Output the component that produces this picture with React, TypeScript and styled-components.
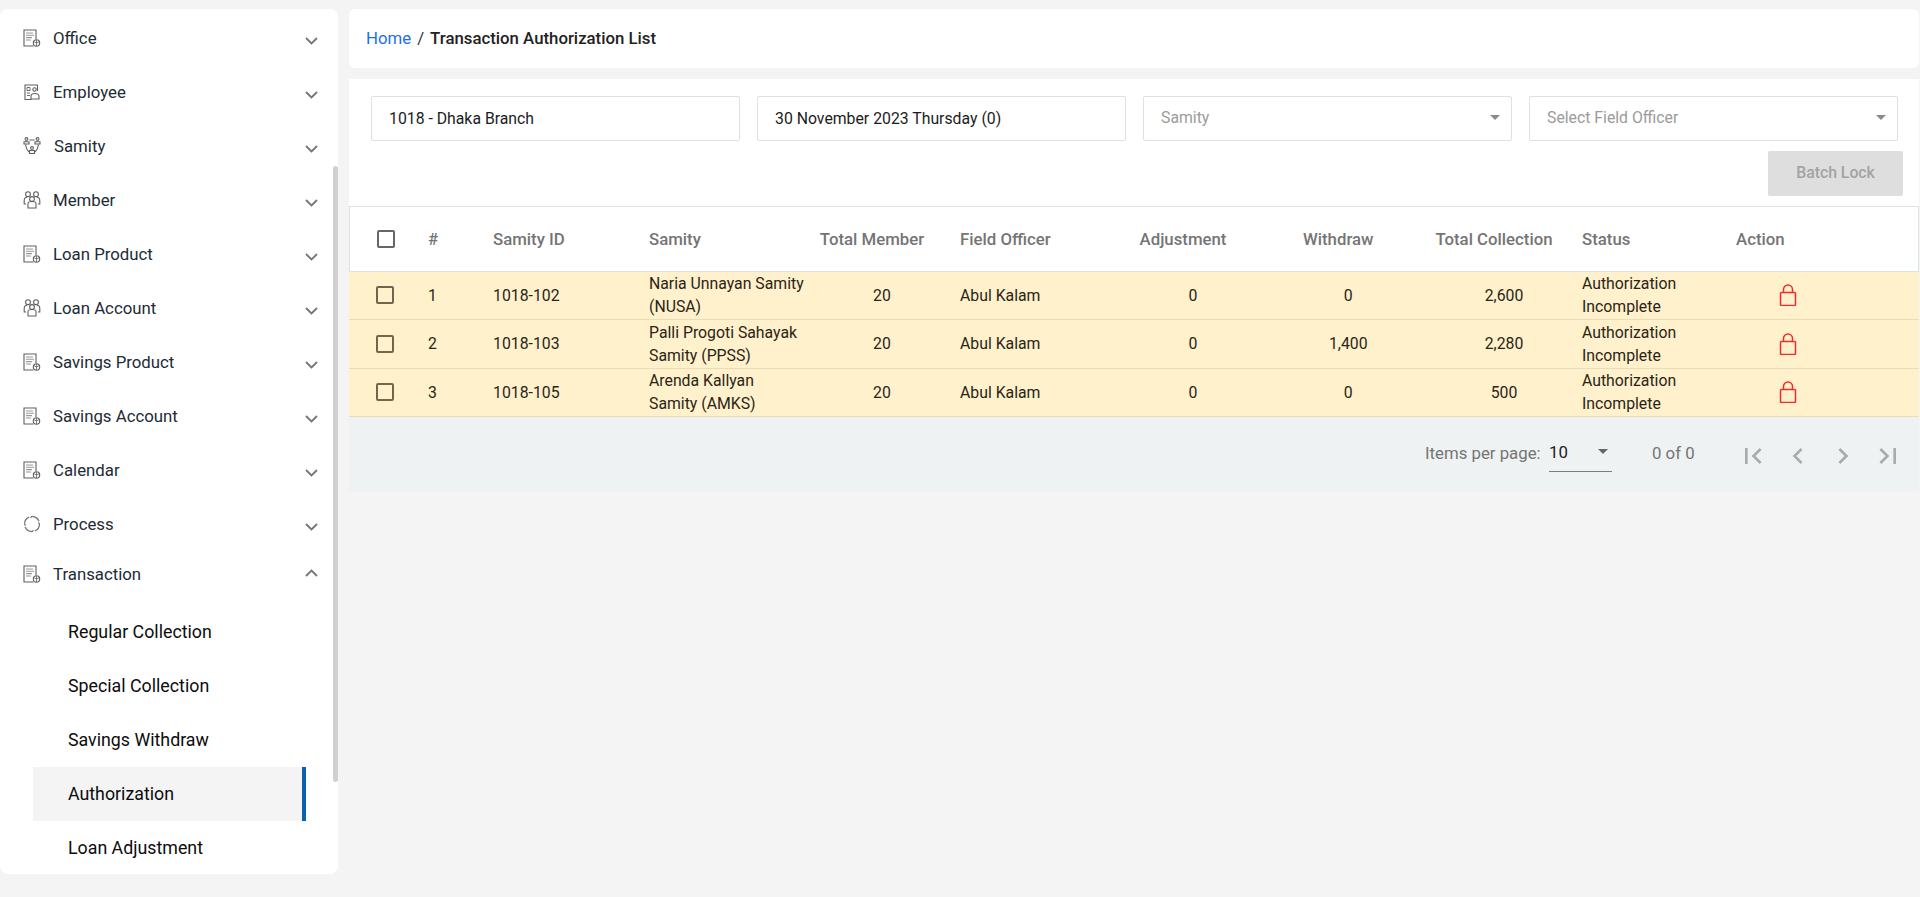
import React from "react";
import styled, { createGlobalStyle } from "styled-components";

const Global = createGlobalStyle`
  html, body { margin: 0; padding: 0; background: #f4f4f4; height: 100%; overflow: hidden; }
  body { font-family: Roboto, "Liberation Sans", sans-serif; }
  * { box-sizing: border-box; }
`;

const Page = styled.div`
  display: grid;
  grid-template-columns: 338px 1fr;
  column-gap: 11px;
  padding: 9px 1px 0 0;
  height: 897px;
  align-items: start;
`;

const Sidebar = styled.aside`
  position: relative;
  height: 865px;
  background: #fff;
  border-radius: 8px;
  overflow: hidden;
`;

const ScrollThumb = styled.div`
  position: absolute;
  right: 0;
  top: 157px;
  width: 5px;
  height: 616px;
  background: #d0d0d0;
  border-radius: 3px;
`;

const Menu = styled.nav`
  display: flex;
  flex-direction: column;
  padding-top: 2px;
`;

const MenuRow = styled.div<{ $open?: boolean }>`
  display: grid;
  grid-template-columns: 17px 1fr 13px;
  align-items: center;
  column-gap: 13px;
  height: ${(p) => (p.$open ? "46px" : "54px")};
  padding: 0 20px 0 23px;
  margin-bottom: ${(p) => (p.$open ? "8px" : "0")};
  color: #212b36;
  font-size: 16.8px;
`;

const MenuLabel = styled.span<{ $shift?: number }>`
  margin-left: ${(p) => p.$shift ?? 0}px;
`;

const Chevron = styled.svg<{ $up?: boolean }>`
  width: 13px;
  height: 8px;
  fill: none;
  stroke: #757575;
  stroke-width: 1.8;
  position: relative;
  top: ${(p) => (p.$up ? "-1px" : "3px")};
`;

const MenuIconSvg = styled.svg`
  width: 18px;
  height: 18px;
  fill: none;
  stroke: #606060;
  stroke-width: 1.1;
`;

const SubRow = styled.div<{ $active?: boolean }>`
  display: flex;
  align-items: center;
  height: 54px;
  width: 273px;
  margin-left: 33px;
  padding: 0 0 1px 35px;
  color: #0c0c0c;
  font-size: 17.8px;
  background: ${(p) => (p.$active ? "#f4f4f4" : "transparent")};
  border-right: ${(p) => (p.$active ? "4px solid #0a62ad" : "none")};
`;

const Main = styled.main`
  display: flex;
  flex-direction: column;
  gap: 11px;
  min-width: 0;
`;

const BreadcrumbCard = styled.div`
  display: flex;
  align-items: center;
  gap: 6px;
  height: 59px;
  padding: 0 0 2px 17px;
  background: #fff;
  border-radius: 6px;
  font-size: 16.8px;
`;

const Home = styled.a`
  color: #1a6ff0;
`;

const Slash = styled.span`
  color: #333;
`;

const Crumb = styled.span`
  color: #222;
  font-weight: 500;
`;

const FilterCard = styled.section`
  background: #fff;
  padding: 17px 0 0;
`;

const FilterGrid = styled.div`
  display: grid;
  grid-template-columns: repeat(4, 368.5px);
  column-gap: 17.5px;
  padding-left: 22px;
`;

const Field = styled.div<{ $placeholder?: boolean }>`
  display: flex;
  align-items: center;
  justify-content: space-between;
  height: 45px;
  padding: ${(p) => (p.$placeholder ? "0 11px 2px 17px" : "0 11px 0 17px")};
  border: 1px solid #e0e0e0;
  border-radius: 2px;
  background: #fff;
  font-size: 15.8px;
  color: ${(p) => (p.$placeholder ? "#9b9b9b" : "#1c1c1c")};
`;

const Caret = styled.span`
  width: 0;
  height: 0;
  border-left: 5px solid transparent;
  border-right: 5px solid transparent;
  border-top: 5px solid #8a8a8a;
`;

const ButtonRow = styled.div`
  display: flex;
  justify-content: flex-end;
  padding: 10px 16px 10px 0;
`;

const BatchButton = styled.button`
  width: 135px;
  height: 45px;
  padding: 0 0 2px;
  border: none;
  border-radius: 2px;
  background: #dedede;
  color: #a3a3a3;
  font: 500 15.8px Roboto, sans-serif;
`;

const cols = "79px 65px 156px 155px 156px 155.5px 155px 155.5px 156px 154px 1fr";

const HeaderRow = styled.div`
  display: grid;
  grid-template-columns: ${cols};
  align-items: center;
  height: 66px;
  box-shadow: inset 0 0 0 1px #d8e4e7;
  background: #fff;
  color: #757575;
  font-size: 16.8px;
  font-weight: 500;
`;

const HeadCell = styled.div<{ $center?: boolean }>`
  text-align: ${(p) => (p.$center ? "center" : "left")};
  padding-right: ${(p) => (p.$center ? "20px" : "0")};
`;

const BodyRow = styled.div`
  display: grid;
  grid-template-columns: ${cols};
  align-items: center;
  height: 48.4px;
  background: #fff1cc;
  border-bottom: 1px solid #e9dcb8;
  color: #2b2416;
  font-size: 15.8px;
  line-height: 23px;
`;

const Cell = styled.div<{ $center?: boolean }>`
  white-space: nowrap;
  text-align: ${(p) => (p.$center ? "center" : "left")};
`;

const Check = styled.span<{ $head?: boolean }>`
  display: block;
  width: 18px;
  height: 18px;
  margin-left: ${(p) => (p.$head ? "28px" : "27px")};
  border: 2px solid ${(p) => (p.$head ? "#666" : "#6f6650")};
  border-radius: 2px;
`;

const LockSvg = styled.svg`
  display: block;
  margin-left: 43px;
  width: 18px;
  height: 22px;
  fill: none;
  stroke: #f5282d;
  stroke-width: 1.5;
`;

const Paginator = styled.div`
  display: flex;
  align-items: center;
  height: 75px;
  padding-left: 1076px;
  background: #eff2f3;
  color: #757575;
  font-size: 16.8px;
`;

const PageLabel = styled.span`
  width: 124px;
  flex: none;
  position: relative;
  top: -2px;
`;

const PageSelect = styled.div`
  position: relative;
  top: -1px;
  flex: none;
  display: flex;
  align-items: center;
  justify-content: space-between;
  width: 63px;
  height: 37px;
  padding: 0 4px 3px 0;
  border-bottom: 1px solid #7d7d7d;
  color: #222;
`;

const SmallCaret = styled(Caret)`
  border-top-color: #666;
`;

const PageCount = styled.span`
  flex: none;
  width: 85px;
  margin-left: 40px;
  position: relative;
  top: -2px;
`;

const PagerIcon = styled.svg`
  flex: none;
  position: relative;
  top: 1px;
  width: 32px;
  height: 32px;
  margin-right: 13px;
  fill: #a9acae;
`;

const docIcon = (
  <MenuIconSvg viewBox="0 0 18 18">
    <path d="M10.500 17H1V1h12v9" />
    <path d="M3 4h7M3 6.300h8M3 8.600h6M3 11h5" stroke="#9a9a9a" />
    <circle cx="13.500" cy="14" r="3.200" />
    <path d="M13.500 11v6M10.900 12.600l2.600 1.400 2.600-1.400" strokeWidth=".8" />
  </MenuIconSvg>
);

const empIcon = (
  <MenuIconSvg viewBox="0 0 18 18">
    <path d="M8.500 16.500H2V2h12.500v6" />
    <path d="M4 4.500h3v3H4zM4 10h3M4 12.500h3" strokeWidth=".9" />
    <circle cx="11.500" cy="6.500" r="1.700" />
    <path d="M8 16v-2.500c0-2 1.500-3 3.500-3s4.500 1 4.500 3V16z" />
  </MenuIconSvg>
);

const samityIcon = (
  <MenuIconSvg viewBox="0 0 18 18" strokeWidth="1">
    <circle cx="3.500" cy="2" r="1.400" />
    <path d="M1 7V4.800h5V7z" />
    <circle cx="14.500" cy="2" r="1.400" />
    <path d="M12 7V4.800h5V7z" />
    <circle cx="9" cy="11" r="1.400" />
    <path d="M6.500 16.500v-3h5v3z" />
    <path d="M6.500 3h5M2.500 7.500c.4 3 1.500 5.500 3.500 7.500M15.500 7.500c-.4 3-1.500 5.500-3.500 7.500" />
  </MenuIconSvg>
);

const memberIcon = (
  <MenuIconSvg viewBox="0 0 18 18">
    <circle cx="5" cy="3.200" r="2.400" />
    <circle cx="13" cy="3.200" r="2.400" />
    <circle cx="9" cy="8" r="2.400" />
    <path d="M3 13H1.200V9.500c0-2 1.300-3.300 3-3.300M15 13h1.800V9.500c0-2-1.300-3.300-3-3.300" />
    <path d="M5 17v-4.500c0-1.500 1.500-2 4-2s4 .5 4 2V17z" />
  </MenuIconSvg>
);

const processIcon = (
  <MenuIconSvg viewBox="0 0 18 18">
    <circle cx="9" cy="9" r="7.500" strokeDasharray="8.600 3.200" strokeWidth="1.300" stroke="#777" />
    <path d="M1.500 9l1 1.500M9 16.500l1.500-1M16.500 9l-1-1.500M9 1.500l-1.500 1" strokeWidth="1.300" />
  </MenuIconSvg>
);

type Item = { label: string; icon: React.ReactNode; shift?: number };

const items: Item[] = [
  { label: "Office", icon: docIcon },
  { label: "Employee", icon: empIcon },
  { label: "Samity", icon: samityIcon, shift: 1 },
  { label: "Member", icon: memberIcon },
  { label: "Loan Product", icon: docIcon },
  { label: "Loan Account", icon: memberIcon },
  { label: "Savings Product", icon: docIcon },
  { label: "Savings Account", icon: docIcon },
  { label: "Calendar", icon: docIcon },
  { label: "Process", icon: processIcon },
];

const subItems = ["Regular Collection", "Special Collection", "Savings Withdraw", "Authorization", "Loan Adjustment"];

const heads: { label: string; center?: boolean }[] = [
  { label: "#" },
  { label: "Samity ID" },
  { label: "Samity" },
  { label: "Total Member", center: true },
  { label: "Field Officer" },
  { label: "Adjustment", center: true },
  { label: "Withdraw", center: true },
  { label: "Total Collection", center: true },
  { label: "Status" },
  { label: "Action" },
];

const rows = [
  { n: 1, id: "1018-102", samity: ["Naria Unnayan Samity", "(NUSA)"], withdraw: "0", total: "2,600" },
  { n: 2, id: "1018-103", samity: ["Palli Progoti Sahayak", "Samity (PPSS)"], withdraw: "1,400", total: "2,280" },
  { n: 3, id: "1018-105", samity: ["Arenda Kallyan", "Samity (AMKS)"], withdraw: "0", total: "500" },
];

const Down = () => (
  <Chevron viewBox="0 0 13 8">
    <path d="M1 1l5.500 5.500L12 1" />
  </Chevron>
);

const Up = () => (
  <Chevron $up viewBox="0 0 13 8">
    <path d="M1 7l5.500-5.500L12 7" />
  </Chevron>
);

const Lock = () => (
  <LockSvg viewBox="0 0 18 22">
    <rect x="1.500" y="8.500" width="15" height="13" rx="1" />
    <path d="M4.500 8.500V5.500a4.500 4.500 0 0 1 9 0v3" />
  </LockSvg>
);

export default function App() {
  return (
    <Page>
      <Global />
      <Sidebar>
        <Menu>
          {items.map((it) => (
            <MenuRow key={it.label}>
              {it.icon}
              <MenuLabel $shift={it.shift}>{it.label}</MenuLabel>
              <Down />
            </MenuRow>
          ))}
          <MenuRow $open>
            {docIcon}
            <MenuLabel>Transaction</MenuLabel>
            <Up />
          </MenuRow>
          {subItems.map((s) => (
            <SubRow key={s} $active={s === "Authorization"}>
              {s}
            </SubRow>
          ))}
        </Menu>
        <ScrollThumb />
      </Sidebar>
      <Main>
        <BreadcrumbCard>
          <Home>Home</Home>
          <Slash>/</Slash>
          <Crumb>Transaction Authorization List</Crumb>
        </BreadcrumbCard>
        <div>
          <FilterCard>
            <FilterGrid>
              <Field>1018 - Dhaka Branch</Field>
              <Field>30 November 2023 Thursday (0)</Field>
              <Field $placeholder>
                Samity
                <Caret />
              </Field>
              <Field $placeholder>
                Select Field Officer
                <Caret />
              </Field>
            </FilterGrid>
            <ButtonRow>
              <BatchButton>Batch Lock</BatchButton>
            </ButtonRow>
            <HeaderRow>
              <Check $head />
              {heads.map((h) => (
                <HeadCell key={h.label} $center={h.center}>
                  {h.label}
                </HeadCell>
              ))}
            </HeaderRow>
          </FilterCard>
          {rows.map((r) => (
            <BodyRow key={r.n}>
              <Check />
              <Cell>{r.n}</Cell>
              <Cell>{r.id}</Cell>
              <Cell>
                {r.samity[0]}
                <br />
                {r.samity[1]}
              </Cell>
              <Cell $center>20</Cell>
              <Cell>Abul Kalam</Cell>
              <Cell $center>0</Cell>
              <Cell $center>{r.withdraw}</Cell>
              <Cell $center>{r.total}</Cell>
              <Cell>
                Authorization
                <br />
                Incomplete
              </Cell>
              <Cell>
                <Lock />
              </Cell>
              <span />
            </BodyRow>
          ))}
          <Paginator>
            <PageLabel>Items per page:</PageLabel>
            <PageSelect>
              10
              <SmallCaret />
            </PageSelect>
            <PageCount>0 of 0</PageCount>
            <PagerIcon viewBox="0 0 24 24">
              <path d="M18.410 16.590L13.820 12l4.590-4.590L17 6l-6 6 6 6zM6 6h2v12H6z" />
            </PagerIcon>
            <PagerIcon viewBox="0 0 24 24">
              <path d="M15.410 7.410L14 6l-6 6 6 6 1.410-1.410L10.830 12z" />
            </PagerIcon>
            <PagerIcon viewBox="0 0 24 24">
              <path d="M10 6L8.590 7.410 13.170 12l-4.580 4.590L10 18l6-6z" />
            </PagerIcon>
            <PagerIcon viewBox="0 0 24 24">
              <path d="M5.590 7.410L10.180 12l-4.590 4.590L7 18l6-6-6-6zM16 6h2v12h-2z" />
            </PagerIcon>
          </Paginator>
        </div>
      </Main>
    </Page>
  );
}
